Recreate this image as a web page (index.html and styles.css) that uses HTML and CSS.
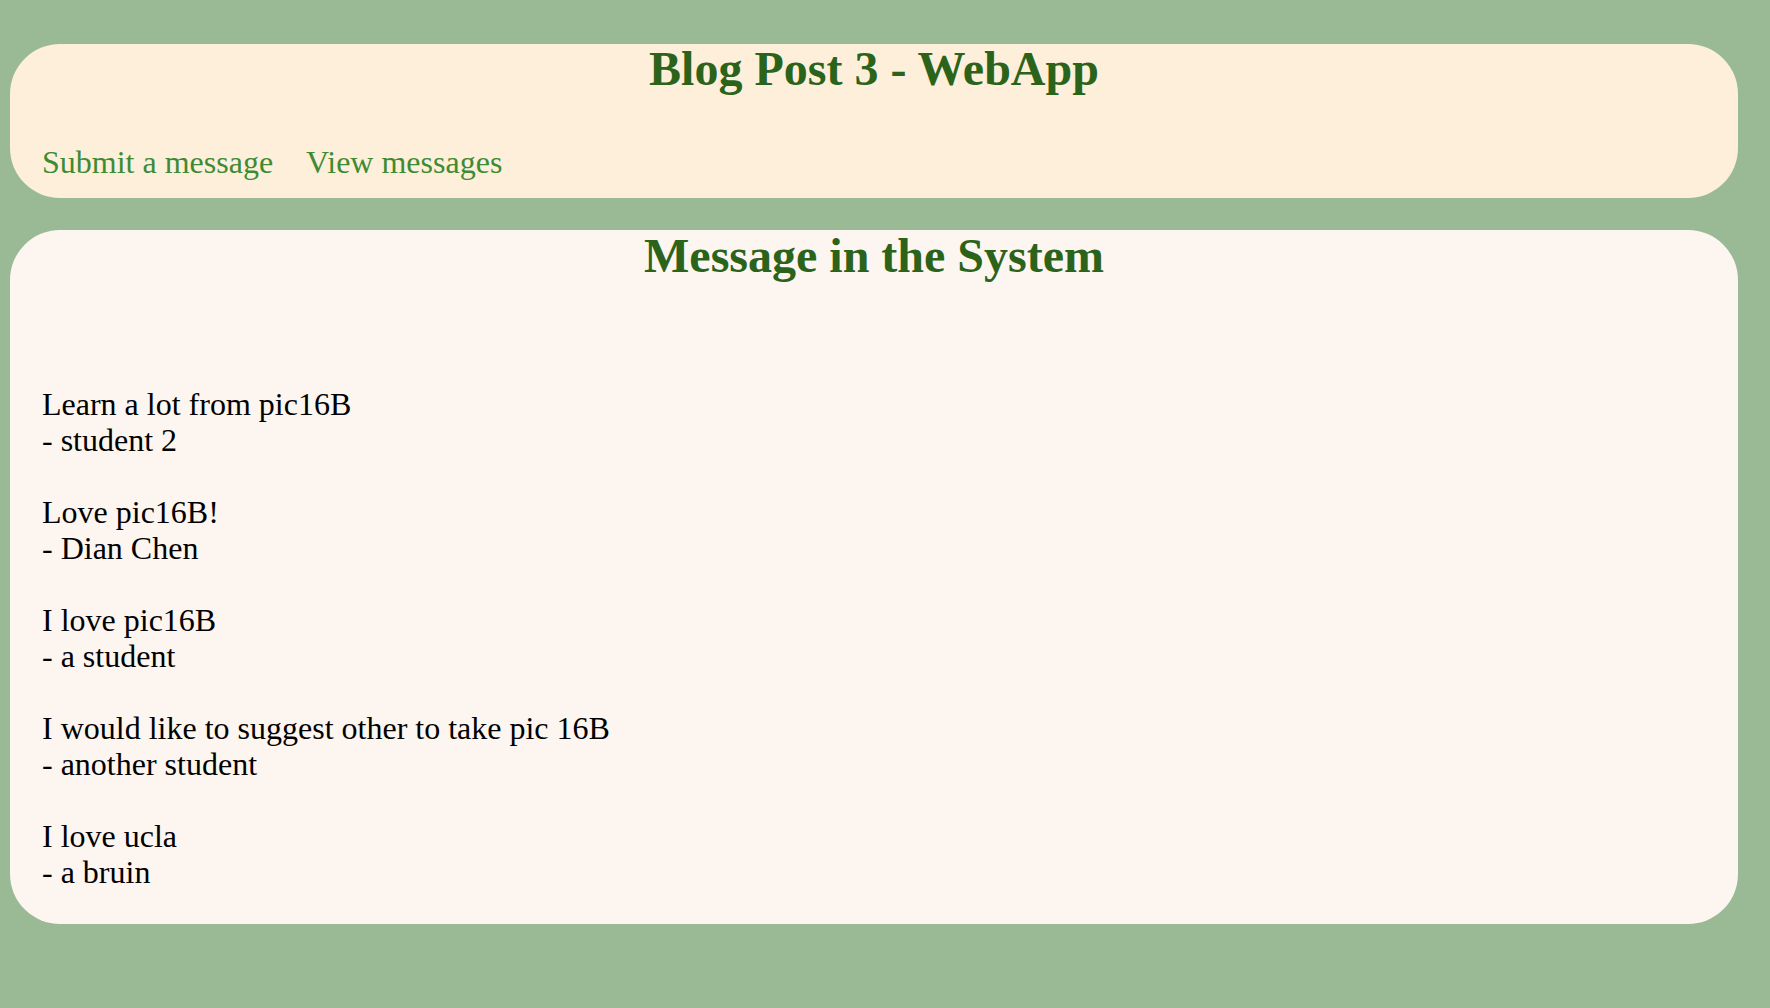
FILE: index.html
```html
<!DOCTYPE html>
<html lang="en">
<head>
<meta charset="utf-8">
<title>Blog Post 3 - WebApp</title>
<link rel="stylesheet" href="styles.css">
</head>
<body>
<div class="page">
  <header class="banner">
    <h1 class="title">Blog Post 3 - WebApp</h1>
    <nav class="nav">
      <a class="nav-link" href="#">Submit a message</a>
      <a class="nav-link" href="#">View messages</a>
    </nav>
  </header>
  <main class="content">
    <h2 class="title">Message in the System</h2>
    <div class="messages">
      <div class="message"><div>Learn a lot from pic16B</div><div>- student 2</div></div>
      <div class="message"><div>Love pic16B!</div><div>- Dian Chen</div></div>
      <div class="message"><div>I love pic16B</div><div>- a student</div></div>
      <div class="message"><div>I would like to suggest other to take pic 16B</div><div>- another student</div></div>
      <div class="message"><div>I love ucla</div><div>- a bruin</div></div>
    </div>
  </main>
</div>
</body>
</html>
```

FILE: styles.css
```css
html, body {
  margin: 0;
  padding: 0;
}
body {
  background: #99ba95;
  font-family: "Liberation Serif", "Times New Roman", serif;
  color: #000;
  min-height: 1008px;
}
.page {
  padding: 44px 32px 0 10px;
  display: flex;
  flex-direction: column;
  gap: 32px;
}
.banner {
  background: #fdefda;
  border-radius: 50px;
  padding: 1px 32px 17px;
}
.title {
  margin: 0;
  font-size: 48px;
  line-height: 48px;
  font-weight: bold;
  text-align: center;
  color: #2b631b;
}
.nav {
  margin-top: 51px;
  display: flex;
  gap: 33px;
  font-size: 32px;
  line-height: 37px;
}
.nav-link {
  color: #3f8b33;
  text-decoration: none;
}
.content {
  background: #fdf5f0;
  border-radius: 50px;
  padding: 2px 32px 34px;
}
.messages {
  margin-top: 106px;
  font-size: 32px;
  line-height: 36px;
}
.message {
  margin-bottom: 36px;
}
.message:last-child {
  margin-bottom: 0;
}
```
